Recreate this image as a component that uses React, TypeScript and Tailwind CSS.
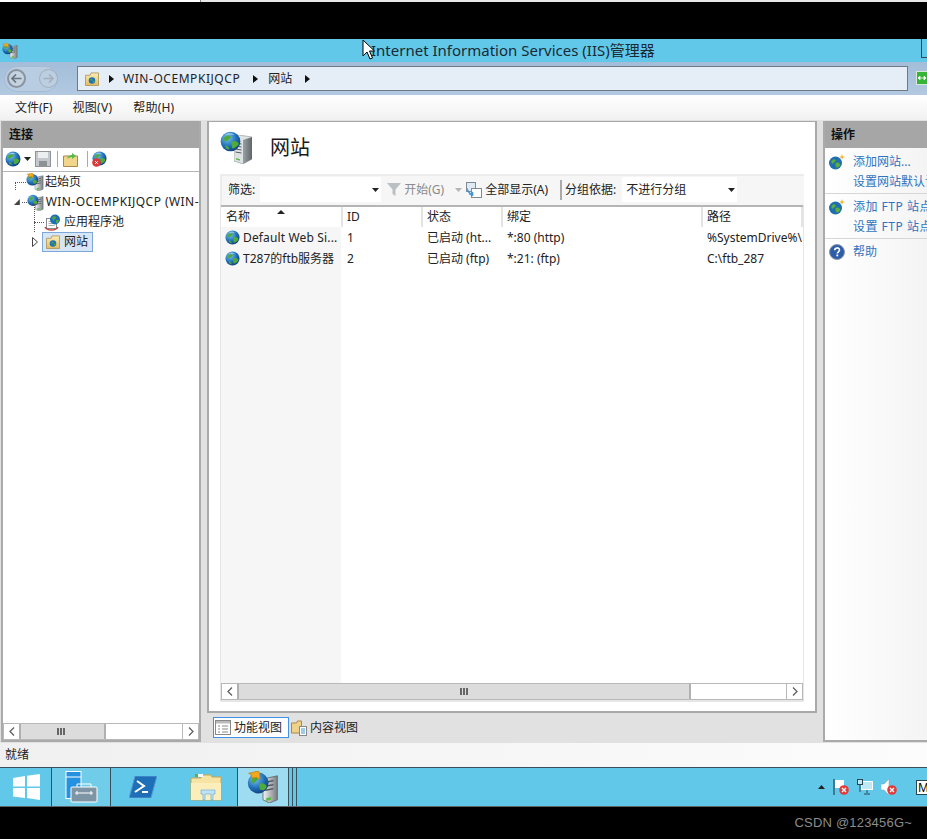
import React from "react";

const font = { fontFamily: '"Noto Sans", "Noto Sans CJK SC", sans-serif' };

function Globe({ size = 16, className = "" }: { size?: number; className?: string }) {
  return (
    <svg width={size} height={size} viewBox="0 0 16 16" className={"shrink-0 " + className}>
      <defs>
        <radialGradient id="gb" cx="35%" cy="30%" r="75%">
          <stop offset="0" stopColor="#7cc4ee" />
          <stop offset="0.6" stopColor="#1f6fb8" />
          <stop offset="1" stopColor="#123f7a" />
        </radialGradient>
      </defs>
      <circle cx="8" cy="8" r="7.500" fill="url(#gb)" />
      <path d="M3 5c2-2 4-2 5-1s-1 2-2 3-2 1-3 0zM9 8c2-1 4 0 5 1s-1 3-3 4-2-1-2-2-1-2 0-3zM4 11c1 0 3 1 3 3-2 0-3-1-3-3z" fill="#4faa3c" />
      <path d="M4 3c2-1.500 5-1.500 7 0-2-.5-5-.5-7 0z" fill="#d8f0fb" opacity="0.8" />
    </svg>
  );
}

function Server({ w = 18, h = 29 }: { w?: number; h?: number }) {
  return (
    <svg width={w} height={h} viewBox="0 0 18 29" className="shrink-0">
      <defs>
        <linearGradient id="sv" x1="0" x2="1" y1="0" y2="0">
          <stop offset="0" stopColor="#9aa0a3" />
          <stop offset="1" stopColor="#5f6669" />
        </linearGradient>
      </defs>
      <path d="M0 3l5-3 13 2v22l-9 5-9-3z" fill="#dfe2e3" stroke="#7b8184" strokeWidth="0.500" />
      <path d="M9 5l9-3v22l-9 5z" fill="url(#sv)" />
      <path d="M1.500 8l6 1M1.500 11l6 1M1.500 14l6 1M1.500 17l6 1" stroke="#565c5f" strokeWidth="1" />
      <path d="M2 23l4 1.300v1.500l-4-1.300z" fill="#58b947" />
    </svg>
  );
}

function GlobeServer({ size = 20, arrow = false }: { size?: number; arrow?: boolean }) {
  return (
    <svg width={size} height={size} viewBox="0 0 20 20" className="shrink-0">
      <defs>
        <linearGradient id="sv2" x1="0" x2="1" y1="0" y2="0">
          <stop offset="0" stopColor="#f2f2f2" />
          <stop offset="1" stopColor="#767c80" />
        </linearGradient>
        <radialGradient id="gb2" cx="35%" cy="30%" r="75%">
          <stop offset="0" stopColor="#7cc4ee" />
          <stop offset="0.6" stopColor="#1f6fb8" />
          <stop offset="1" stopColor="#123f7a" />
        </radialGradient>
      </defs>
      <path d="M10 5l9-2v15l-5 2-4-2z" fill="url(#sv2)" stroke="#5d6366" strokeWidth="0.500" />
      <path d="M11.500 7l5-1M11.500 9.500l5-1M11.500 12l5-1" stroke="#4d5356" strokeWidth="0.900" />
      <path d="M12 17l3-.8v1.800l-3 .8z" fill="#58b947" />
      <circle cx="7" cy="7.500" r="6.500" fill="url(#gb2)" />
      <path d="M3 5c2-2 3-2 4-1s-1 2-2 3-1 1-2 0zM8 8c2-1 3 0 4 1s-1 3-2 3-2 0-2-1-1-2 0-3z" fill="#4faa3c" />
      {arrow && <path d="M1 1.500l6-1.500 1 1.500v4l-2-1.500-3 .5-.5-2.500z" fill="#f2a81d" stroke="#b87410" strokeWidth="0.400" />}
    </svg>
  );
}

function FolderGlobe({ size = 15 }: { size?: number }) {
  return (
    <svg width={size} height={size} viewBox="0 0 15 15" className="shrink-0">
      <defs>
        <linearGradient id="fg" x1="0" x2="0" y1="0" y2="1">
          <stop offset="0" stopColor="#fbeeb8" />
          <stop offset="1" stopColor="#e2bb62" />
        </linearGradient>
      </defs>
      <path d="M.5 3.500h5l1-2.500h8v13.500H.5z" fill="url(#fg)" stroke="#a8894a" strokeWidth="0.800" />
      <circle cx="7.500" cy="9" r="3.500" fill="#1d72b5" />
      <path d="M5.500 8c1-1 2-1 2.500 0s-1 1-1.500 1.500zM8 10l2-1 .5 1-1.500 1.500z" fill="#56ab3c" />
    </svg>
  );
}

function Bullet() {
  return (
    <svg width="5" height="8" viewBox="0 0 5 8">
      <path d="M0 0l5 4-5 4z" fill="#111" />
    </svg>
  );
}

function Caret({ className = "" }: { className?: string }) {
  return (
    <svg width="7" height="4" viewBox="0 0 7 4" className={"shrink-0 " + className}>
      <path d="M0 0h7L3.500 4z" fill="#222" />
    </svg>
  );
}

function AddGlobe() {
  return (
    <svg width="16" height="16" viewBox="0 0 16 16" className="shrink-0">
      <circle cx="6.500" cy="9" r="6.500" fill="#1f6fb0" />
      <path d="M2.500 7c1.500-2 3-2 4-1s-1 2-2 3-1 1-2 0zM7 9c2-1 3 0 4 1s-1 3-2.500 3.500S6.500 12 6.500 11 6 9.500 7 9z" fill="#5aae3f" />
      <path d="M13 0l.7 2.300L16 3l-2.300.7L13 6l-.7-2.300L10 3l2.300-.7z" fill="#f6b21d" />
    </svg>
  );
}

function Help() {
  return (
    <svg width="16" height="16" viewBox="0 0 16 16" className="shrink-0">
      <circle cx="8" cy="8" r="7.500" fill="#2f5ea8" stroke="#8d97a8" />
      <path d="M5.700 6.200c0-3 4.800-3 4.800-.2 0 1.800-2.200 1.800-2.200 3.600" fill="none" stroke="#fff" strokeWidth="1.600" />
      <rect x="7.400" y="10.500" width="1.800" height="1.800" fill="#fff" />
    </svg>
  );
}

function ScrollBar({ thumb, grip }: { thumb: number; grip: number }) {
  return (
    <div className="flex h-[17px] bg-white border border-[#b8b8b8] shrink-0">
      <div className="w-[17px] shrink-0 flex items-center justify-center border-r-2 border-[#b0b0b0]">
        <svg width="6" height="9" viewBox="0 0 6 9"><path d="M5 .5L1 4.500l4 4" fill="none" stroke="#606060" strokeWidth="1.300" /></svg>
      </div>
      <div className="bg-[#dcdcdc] border-r-2 border-[#b0b0b0] flex items-center shrink-0" style={{ width: thumb, paddingLeft: grip }}>
        <div className="flex gap-[1px]">
          <div className="w-[2px] h-[7px] bg-[#666]" />
          <div className="w-[2px] h-[7px] bg-[#666]" />
          <div className="w-[2px] h-[7px] bg-[#666]" />
        </div>
      </div>
      <div className="grow" />
      <div className="w-[16px] shrink-0 flex items-center justify-center border-l border-[#b8b8b8]">
        <svg width="6" height="9" viewBox="0 0 6 9"><path d="M1 .5l4 4-4 4" fill="none" stroke="#606060" strokeWidth="1.300" /></svg>
      </div>
    </div>
  );
}

function TrayX() {
  return (
    <svg width="10" height="10" viewBox="0 0 10 10" className="absolute right-0 bottom-0">
      <circle cx="5" cy="5" r="4.800" fill="#e23a3a" />
      <path d="M3 3l4 4M7 3l-4 4" stroke="#fff" strokeWidth="1.400" />
    </svg>
  );
}

const th = "flex items-center h-[20px] bg-white border-r-2 border-[#e4e4e4] text-[12px] text-[#222] shrink-0";
const td = "pl-[5px] text-[12px] text-[#222] whitespace-nowrap overflow-hidden shrink-0";

export default function App() {
  return (
    <div className="w-[927px] h-[839px] overflow-hidden bg-black flex flex-col relative" style={font}>
      {/* top strip */}
      <div className="h-[2px] flex shrink-0">
        <div className="w-[200px] bg-white" />
        <div className="w-[1px] bg-[#888]" />
        <div className="grow bg-[#e8e8e8]" />
      </div>
      <div className="h-[37px] shrink-0 bg-black" />

      {/* title bar */}
      <div className="h-[23px] shrink-0 bg-[#62c8ea] flex items-center relative">
        <div className="ml-[2px] w-[16px] h-[16px]"><GlobeServer size={16} arrow /></div>
        <div className="ml-[353px] text-[15px] leading-[23px] text-[#1a2a33] whitespace-nowrap">Internet Information Services (IIS)管理器</div>
        <div className="absolute right-0 top-0 w-[6px] h-[19px] border-l border-b border-[#2f4650]" />
      </div>

      {/* address bar */}
      <div className="h-[33px] shrink-0 bg-gradient-to-b from-[#a3bdd9] to-[#b2c9e1] flex items-center pl-[4px] pr-0">
        <div className="w-[54px] h-[26px] rounded-full bg-[#b9cde2] flex items-center gap-[13px] pl-[2px] border border-[#a5bbd3] shrink-0">
          <div className="w-[19px] h-[19px] rounded-full border-2 border-[#8a949e] bg-[#c5d2e0] flex items-center justify-center shrink-0">
            <svg width="11" height="9" viewBox="0 0 11 9"><path d="M5 .5L1 4.500l4 4M1 4.500h9.500" fill="none" stroke="#6a7580" strokeWidth="1.700" /></svg>
          </div>
          <div className="w-[19px] h-[19px] rounded-full border border-[#a3afbb] bg-[#bccee1] flex items-center justify-center shrink-0">
            <svg width="11" height="9" viewBox="0 0 11 9"><path d="M6 .5l4 4-4 4M10 4.500H.5" fill="none" stroke="#a3afbb" strokeWidth="1.500" /></svg>
          </div>
        </div>
        <div className="ml-[19px] h-[25px] w-[831px] shrink-0 bg-[#e5edf6] border border-[#707a85] flex items-center pl-[7px] text-[12px] text-[#222]">
          <FolderGlobe size={14} />
          <div className="ml-[10px]"><Bullet /></div>
          <span className="ml-[9px] tracking-[0.55px]">WIN-OCEMPKIJQCP</span>
          <div className="ml-[13px]"><Bullet /></div>
          <span className="ml-[10px]">网站</span>
          <div className="ml-[13px]"><Bullet /></div>
        </div>
        <div className="ml-[8px] w-[12px] h-[14px] bg-[#35b535] border border-[#d8e8d8] shrink-0 -mt-[2px] flex items-center justify-center">
          <svg width="10" height="8" viewBox="0 0 10 8"><path d="M1 4l2-2v4zM9 4L7 2v4zM3 4h4" fill="#fff" stroke="#fff" strokeWidth="0.700" /></svg>
        </div>
      </div>

      {/* menu */}
      <div className="h-[25px] shrink-0 bg-gradient-to-b from-white to-[#f1f1f1] flex items-center pl-[15px] text-[12px] text-[#222]">
        <span>文件(F)</span>
        <span className="ml-[20px] tracking-[0.3px]">视图(V)</span>
        <span className="ml-[21px] tracking-[0.15px]">帮助(H)</span>
      </div>

      {/* main */}
      <div className="h-[623px] shrink-0 bg-[#e1e1e1] flex pt-[1px] pl-[1px] gap-[6px]">
        {/* left */}
        <div className="w-[200px] h-[621px] shrink-0 border-2 border-[#aaaaaa] border-t-0 bg-white flex flex-col">
          <div className="h-[27px] shrink-0 bg-[#a6a6a6] flex items-center pl-[6px] text-[12px] font-bold text-[#111]">连接</div>
          <div className="h-[24px] shrink-0 bg-white border-b border-[#b5b5b5] flex items-center pl-[2px] pb-[1px]">
            <Globe size={16} />
            <Caret className="ml-[3px]" />
            <svg width="16" height="16" viewBox="0 0 16 16" className="ml-[4px]">
              <rect x="0.500" y="0.500" width="15" height="15" fill="#c4c8cc" stroke="#909498" />
              <rect x="3" y="1" width="10" height="6" fill="#eceef0" />
              <rect x="4" y="10" width="8" height="5" fill="#8d9296" />
            </svg>
            <div className="ml-[6px] w-[1px] h-[16px] bg-[#aaa]" />
            <svg width="15" height="15" viewBox="0 0 15 15" className="ml-[5px]">
              <path d="M.5 4h14v10.500H.5z" fill="#f0d58a" stroke="#a8894a" />
              <path d="M4 7c1-3 3-4 5-4V1l4 3-4 3V5C7 5 5 6 4 7z" fill="#58b947" />
            </svg>
            <div className="ml-[9px] w-[1px] h-[16px] bg-[#aaa]" />
            <div className="ml-[4px] relative w-[16px] h-[16px]">
              <Globe size={15} />
              <svg width="9" height="9" viewBox="0 0 9 9" className="absolute left-0 bottom-0">
                <circle cx="4.500" cy="4.500" r="4.300" fill="#d83a3a" />
                <path d="M3 3l3 3M6 3L3 6" stroke="#fff" />
              </svg>
            </div>
          </div>
          <div className="grow text-[12px] text-[#222] relative">
            <div className="flex h-[20px] items-center pl-[12px]">
              <div className="w-[11px] h-[1px] border-t border-dotted border-[#555]" />
              <GlobeServer size={18} arrow />
              <span className="ml-[1px]">起始页</span>
            </div>
            <div className="flex h-[20px] items-center pl-[11px]">
              <svg width="6" height="6" viewBox="0 0 6 6"><path d="M6 0v6H0z" fill="#444" /></svg>
              <div className="ml-[2px] w-[5px] h-[1px] border-t border-dotted border-[#555]" />
              <GlobeServer size={17} />
              <span className="ml-[2px] whitespace-nowrap tracking-[0.45px]">WIN-OCEMPKIJQCP (WIN-</span>
            </div>
            <div className="flex h-[20px] items-center pl-[31px]">
              <div className="w-[10px] h-[1px] border-t border-dotted border-[#555]" />
              <svg width="17" height="17" viewBox="0 0 17 17" className="shrink-0">
                <rect x="2.500" y="4.500" width="10" height="10" fill="#fff" stroke="#858a90" />
                <path d="M4.500 7.500h6M4.500 9.500h6M4.500 11.500h6" stroke="#a9aeb3" />
                <circle cx="11" cy="5.500" r="5" fill="#1f6fb8" />
                <path d="M8 4c1-2 3-2 4-1s-2 2-2 3-1 1-2-2zM12 6l3 0-1 3-2 0z" fill="#4faa3c" />
                <path d="M1 13c2 4 11 4 13 0" fill="none" stroke="#c9423a" strokeWidth="1.500" />
              </svg>
              <span className="ml-[3px]">应用程序池</span>
            </div>
            <div className="flex h-[20px] items-center pl-[29px]">
              <svg width="6" height="10" viewBox="0 0 6 10" className="shrink-0"><path d="M.5.5l5 4.500-5 4.500z" fill="#fff" stroke="#444" /></svg>
              <div className="ml-[4px] h-[20px] w-[51px] bg-[#d7e6f7] border border-[#7da7d9] flex items-center pl-[3px]">
                <FolderGlobe size={14} />
                <span className="ml-[4px]">网站</span>
              </div>
            </div>
            <div className="absolute left-[12px] top-[10px] h-[8px] border-l border-dotted border-[#555]" />
            <div className="absolute left-[31px] top-[32px] h-[28px] border-l border-dotted border-[#555]" />
          </div>
          <ScrollBar thumb={85} grip={36} />
        </div>

        {/* center */}
        <div className="w-[610px] shrink-0 flex flex-col">
          <div className="w-[610px] h-[592px] bg-white border-2 border-[#a8a8a8] border-t-[1px] flex flex-col pl-[11px] pr-[11px]">
            <div className="h-[52px] shrink-0 flex items-center">
              <div className="w-[33px] h-[33px] relative shrink-0 -mt-[1px]">
                <div className="absolute left-[14px] top-[4px]"><Server /></div>
                <Globe size={21} className="absolute left-0 top-0" />
              </div>
              <span className="ml-[17px] text-[20px] text-[#1a1a1a] leading-none -mt-[1px]">网站</span>
            </div>
            <div className="h-[31px] shrink-0 bg-[#f6f6f6] border-t-2 border-l-2 border-[#ececec] flex items-center pb-[2px] text-[12px] text-[#222]">
              <span className="ml-[6px]">筛选:</span>
              <div className="ml-[5px] w-[121px] h-[25px] bg-white flex items-center justify-end pr-[2px]"><Caret /></div>
              <svg width="14" height="13" viewBox="0 0 14 13" className="ml-[6px] shrink-0"><path d="M0 0h14L8.500 6.500V13L5.500 11V6.500z" fill="#b9bfc2" /></svg>
              <span className="ml-[3px] text-[#8a8a8a]">开始(G)</span>
              <Caret className="ml-[11px] opacity-30" />
              <svg width="16" height="16" viewBox="0 0 16 16" className="ml-[4px] shrink-0">
                <rect x="0.500" y="0.500" width="9" height="9" fill="#dfeaf5" stroke="#7f8a94" />
                <rect x="5.500" y="6.500" width="10" height="9" fill="#fff" stroke="#7f8a94" />
                <path d="M3 12l4-2v4zM1 6c0 3 2 6 4 6" fill="#3d94d8" stroke="#3d94d8" strokeWidth="0.600" />
              </svg>
              <span className="ml-[3px]">全部显示(A)</span>
              <div className="ml-[12px] w-[2px] h-[20px] bg-[#aaa]" />
              <span className="ml-[3px]">分组依据:</span>
              <div className="ml-[6px] w-[115px] h-[25px] bg-white flex items-center justify-between pl-[4px] pr-[2px]">
                <span>不进行分组</span>
                <Caret />
              </div>
            </div>
            <div className="grow flex flex-col border-l border-r border-[#e6e6e6] border-b-2 border-b-[#e6e6e6] mb-[9px] w-[584px] relative">
              <div className="flex h-[20px] border-t-2 border-[#b5b5b5] box-content shrink-0">
                <div className={th + " w-[122px] pl-[5px] relative"}>
                  名称
                  <svg width="8" height="4" viewBox="0 0 8 4" className="absolute left-[56px] top-[3px]"><path d="M0 4h8L4 0z" fill="#222" /></svg>
                </div>
                <div className={th + " w-[80px] pl-[4px]"}>ID</div>
                <div className={th + " w-[80px] pl-[4px]"}>状态</div>
                <div className={th + " w-[200px] pl-[4px]"}>绑定</div>
                <div className={th + " w-[100px] pl-[4px] border-r-0"}>路径</div>
              </div>
              <div className="grow flex">
                <div className="w-[120px] bg-[#f6f6f6] shrink-0 text-[12px] text-[#222]">
                  <div className="h-[21px] flex items-center pl-[4px] whitespace-nowrap"><Globe size={15} /><span className="ml-[3px] tracking-[0.15px]">Default Web Si...</span></div>
                  <div className="h-[21px] flex items-center pl-[4px] whitespace-nowrap"><Globe size={15} /><span className="ml-[3px]">T287的ftb服务器</span></div>
                </div>
                <div className="grow">
                  <div className="flex h-[21px] items-center">
                    <div className={td + " w-[81px] pl-[6px]"}>1</div>
                    <div className={td + " w-[80px]"}>已启动 (ht...</div>
                    <div className={td + " w-[200px]"}>*:80 (http)</div>
                    <div className={td + " w-[100px]"}>%SystemDrive%\</div>
                  </div>
                  <div className="flex h-[21px] items-center">
                    <div className={td + " w-[81px] pl-[6px]"}>2</div>
                    <div className={td + " w-[80px]"}>已启动 (ftp)</div>
                    <div className={td + " w-[200px]"}>*:21: (ftp)</div>
                    <div className={td + " w-[100px]"}>C:\ftb_287</div>
                  </div>
                </div>
              </div>
              <ScrollBar thumb={452} grip={221} />
            </div>
          </div>
          <div className="flex items-center h-[26px] pl-[6px] pt-[3px] text-[12px] text-[#222]">
            <div className="h-[21px] w-[76px] bg-white border border-[#3f92e6] flex items-center pl-[1px]">
              <svg width="16" height="15" viewBox="0 0 16 15" className="shrink-0">
                <rect x="0.500" y="0.500" width="15" height="14" fill="#fff" stroke="#888" />
                <rect x="1" y="1" width="14" height="2.500" fill="#bbb" />
                <path d="M3 6h2M3 9h2M3 12h2M7 6h6M7 9h6M7 12h6" stroke="#888" />
              </svg>
              <span className="ml-[3px]">功能视图</span>
            </div>
            <svg width="16" height="16" viewBox="0 0 16 16" className="ml-[2px] shrink-0">
              <path d="M.5 3h5l1-2h4v12H.5z" fill="#eed28b" stroke="#a8894a" />
              <rect x="8.500" y="6.500" width="7" height="9" fill="#fff" stroke="#888" />
              <path d="M10 9h4M10 11h4M10 13h4" stroke="#3d94d8" />
            </svg>
            <span className="ml-[3px]">内容视图</span>
          </div>
        </div>

        {/* right */}
        <div className="grow min-w-0 h-[621px] border-l-2 border-b-2 border-[#aaaaaa] bg-gradient-to-r from-white to-[#f4f4f4] flex flex-col text-[12px] text-[#2f74c0] whitespace-nowrap overflow-hidden">
          <div className="h-[27px] shrink-0 bg-[#a6a6a6] flex items-center pl-[6px] font-bold text-[#111]">操作</div>
          <div className="border-b border-[#d6d6d6] h-[46px] pt-[4px] pl-[4px]">
            <div className="flex items-center h-[20px]"><AddGlobe /><span className="ml-[8px]">添加网站...</span></div>
            <div className="h-[20px] pl-[24px] leading-[20px]">设置网站默认设置...</div>
          </div>
          <div className="border-b border-[#d6d6d6] h-[45px] pt-[3px] pl-[4px]">
            <div className="flex items-center h-[20px]"><AddGlobe /><span className="ml-[8px] tracking-[0.5px]">添加 FTP 站点...</span></div>
            <div className="h-[20px] pl-[24px] leading-[20px] tracking-[0.5px]">设置 FTP 站点默认设置...</div>
          </div>
          <div className="flex items-center h-[20px] mt-[3px] pl-[4px]"><Help /><span className="ml-[8px]">帮助</span></div>
        </div>
      </div>

      {/* status */}
      <div className="h-[24px] shrink-0 bg-gradient-to-r from-[#f0f0f0] to-[#fcfcfc] flex items-center pl-[5px] text-[12px] text-[#222]">就绪</div>

      {/* taskbar */}
      <div className="h-[40px] shrink-0 bg-[#62c8ea] border-t border-[#39505a] border-b border-b-[#5c6468] flex items-stretch">
        <div className="w-[52px] border-r border-[#39505a] flex items-center justify-center pl-[1px]">
          <svg width="27" height="26" viewBox="0 0 27 26">
            <path d="M0 4l12-2v10.500H0zM14 1.700L27 0v12.500H14zM0 14h12v10L0 22.500zM14 14h13v12l-13-2z" fill="#fff" />
          </svg>
        </div>
        <div className="w-[59px] border-r border-[#39505a] bg-[#70cdea] flex items-center pl-[13px]">
          <svg width="33" height="32" viewBox="0 0 33 32">
            <rect x="1" y="0.500" width="15" height="27" fill="#2492e0" stroke="#fff" />
            <path d="M1 6h15" stroke="#fff" />
            <rect x="6" y="16" width="26" height="15" rx="1" fill="#7e95a6" stroke="#fff" />
            <path d="M12 16v-3h14v3" fill="none" stroke="#fff" />
            <path d="M10 22h18M12 20v4M26 20v4" stroke="#fff" />
          </svg>
        </div>
        <div className="w-[127px] border-r border-[#39505a] flex items-center pl-[18px] gap-[33px]">
          <svg width="28" height="22" viewBox="0 0 28 22">
            <path d="M6 0h22l-6 22H0z" fill="#1f6fb8" stroke="#5b9cd0" />
            <path d="M8 5l7 5-9 6" fill="none" stroke="#fff" strokeWidth="2" />
            <path d="M13 16h6" stroke="#fff" strokeWidth="2" />
          </svg>
          <svg width="32" height="29" viewBox="0 0 32 29">
            <path d="M1 5h10l1-3h9l1 2h9v23H1z" fill="#f7e3a3" stroke="#c8a653" />
            <path d="M1 10h30v17H1z" fill="#fbeebb" />
            <path d="M5 1h8v3H5z" fill="#fff" />
            <path d="M5 1h3v3H5z" fill="#4ab84a" />
            <path d="M11 21v-4h14v4h-2v6h-2v-6h-6v6h-2v-6z" fill="#bfe3f5" stroke="#5aaad6" strokeWidth="0.600" />
          </svg>
        </div>
        <div className="w-[51px] border-r border-[#39505a] bg-[#9edcf2] flex items-center justify-center">
          <GlobeServer size={32} arrow />
        </div>
        <div className="w-[4px] border-r border-[#39505a]" />
        <div className="w-[4px] border-r border-[#39505a]" />
        <div className="grow flex items-center justify-end">
          <Caret className="rotate-180 mr-[8px]" />
          <div className="relative w-[16px] h-[16px] mr-[8px]">
            <svg width="12" height="16" viewBox="0 0 12 16"><path d="M1 0v16" stroke="#2a4652" strokeWidth="1.200" /><path d="M2 1h9v8H2z" fill="#fff" /></svg>
            <TrayX />
          </div>
          <svg width="16" height="16" viewBox="0 0 16 16" className="mr-[8px]">
            <rect x="4.500" y="2.500" width="11" height="8" fill="#bfe8f5" stroke="#fff" />
            <rect x="0.500" y="0.500" width="5" height="5" fill="#bfe8f5" stroke="#2a4652" />
            <path d="M10 11v3M7 15h6M3 6v7" stroke="#2a4652" />
          </svg>
          <div className="relative w-[16px] h-[16px] mr-[19px]">
            <svg width="10" height="16" viewBox="0 0 10 16"><path d="M0 5h3l5-5v16l-5-5H0z" fill="#fff" stroke="#8a9aa2" strokeWidth="0.500" /></svg>
            <TrayX />
          </div>
          <div className="w-[11px] h-[15px] bg-white border-l border-t border-b border-[#2a4652] text-[12px] leading-[13px] text-black pl-[1px] overflow-hidden">M</div>
        </div>
      </div>

      {/* bottom */}
      <div className="grow bg-black flex items-center justify-end pr-[15px] text-[13px] tracking-[0.2px] text-[#8c8c8c]" style={{ fontFamily: '"Liberation Sans", sans-serif' }}>
        CSDN @123456G~
      </div>

      {/* cursor */}
      <svg width="13" height="21" viewBox="0 0 13 21" className="absolute left-[362px] top-[39px]">
        <path d="M1 1v16l4-4 3 7 2.500-1-3-7h5z" fill="#fff" stroke="#000" strokeWidth="1" />
      </svg>
    </div>
  );
}
